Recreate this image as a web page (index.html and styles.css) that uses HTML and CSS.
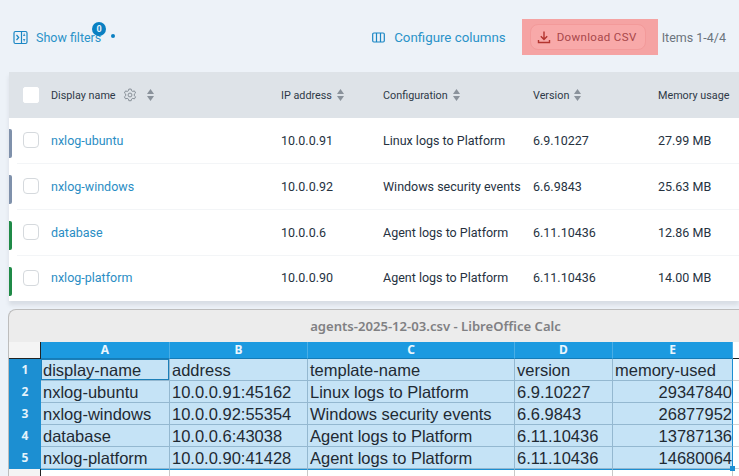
FILE: index.html
```html
<!DOCTYPE html>
<html lang="en">
<head>
<meta charset="utf-8">
<title>Agents</title>
<link rel="stylesheet" href="styles.css">
</head>
<body>
<div class="page">
  <div class="toolbar">
    <a class="tool filters">
      <svg class="ico" width="15" height="15" viewBox="0 0 15 15" fill="none" stroke="#1a86c4" stroke-width="1.2"><rect x="1" y="1.5" width="13" height="12" rx="1.5"/><path d="M8.5 1.5v12M3.5 5l2.2 2.5L3.5 10"/><path d="M11.2 3.6v2M10.2 5l1 1 1-1M11.2 11.4v-2M10.2 10l1-1 1 1" stroke-width=".9"/></svg>
      <span class="filter-label">Show filters<span class="badge">0</span></span>
      <span class="dot"></span>
    </a>
    <span class="spring"></span>
    <a class="tool columns">
      <svg class="ico" width="13" height="11" viewBox="0 0 13 11" fill="none" stroke="#1a86c4" stroke-width="1.2"><rect x=".7" y="1" width="11.6" height="9" rx="1.2"/><path d="M4.5 1v9M8.5 1v9"/></svg>
      <span>Configure columns</span>
    </a>
    <div class="highlight">
      <button class="csv">
        <svg width="14" height="14" viewBox="0 0 14 14" fill="none" stroke="#b3342f" stroke-width="1.4"><path d="M7 1.5v7.5M3.8 6.2L7 9.4l3.2-3.2M1.5 10v2.5h11V10"/></svg>
        <span>Download CSV</span>
      </button>
    </div>
    <span class="items">Items 1-4/4</span>
  </div>

  <div class="table">
    <div class="row head">
      <span class="cell-check"><span class="check head-check"></span></span>
      <span class="cell name-head">Display name
        <svg class="gear" width="14" height="14" viewBox="0 0 13 13" fill="none" stroke="#858d96" stroke-width=".9"><path d="M5.4 1h2.2l.3 1.5 1.2.7 1.5-.5 1.1 1.9-1.2 1v1.6l1.2 1-1.1 1.9-1.5-.5-1.2.7-.3 1.5H5.4l-.3-1.5-1.2-.7-1.5.5-1.1-1.9 1.2-1V5.6l-1.2-1 1.1-1.9 1.5.5 1.2-.7z"/><circle cx="6.5" cy="6.5" r="1.8"/></svg>
        <svg class="sort first" width="7" height="12" viewBox="0 0 7 12"><path d="M3.5 0L7 5H0z" fill="#8a929b"/><path d="M3.5 12L0 7h7z" fill="#8a929b"/></svg>
      </span>
      <span class="cell">IP address <svg class="sort" width="7" height="12" viewBox="0 0 7 12"><path d="M3.5 0L7 5H0z" fill="#8a929b"/><path d="M3.5 12L0 7h7z" fill="#8a929b"/></svg></span>
      <span class="cell">Configuration <svg class="sort" width="7" height="12" viewBox="0 0 7 12"><path d="M3.5 0L7 5H0z" fill="#8a929b"/><path d="M3.5 12L0 7h7z" fill="#8a929b"/></svg></span>
      <span class="cell">Version <svg class="sort" width="7" height="12" viewBox="0 0 7 12"><path d="M3.5 0L7 5H0z" fill="#8a929b"/><path d="M3.5 12L0 7h7z" fill="#8a929b"/></svg></span>
      <span class="cell">Memory usage</span>
    </div>
    <div class="row body">
      <span class="cell-check"><span class="status grey"></span><span class="check"></span></span>
      <a class="cell link">nxlog-ubuntu</a><span class="cell">10.0.0.91</span><span class="cell">Linux logs to Platform</span><span class="cell">6.9.10227</span><span class="cell">27.99 MB</span>
    </div>
    <div class="row body">
      <span class="cell-check"><span class="status grey"></span><span class="check"></span></span>
      <a class="cell link">nxlog-windows</a><span class="cell">10.0.0.92</span><span class="cell">Windows security events</span><span class="cell">6.6.9843</span><span class="cell">25.63 MB</span>
    </div>
    <div class="row body">
      <span class="cell-check"><span class="status green"></span><span class="check"></span></span>
      <a class="cell link">database</a><span class="cell">10.0.0.6</span><span class="cell">Agent logs to Platform</span><span class="cell">6.11.10436</span><span class="cell">12.86 MB</span>
    </div>
    <div class="row body last">
      <span class="cell-check"><span class="status green"></span><span class="check"></span></span>
      <a class="cell link">nxlog-platform</a><span class="cell">10.0.0.90</span><span class="cell">Agent logs to Platform</span><span class="cell">6.11.10436</span><span class="cell">14.00 MB</span>
    </div>
  </div>

  <div class="window">
    <div class="titlebar">agents-2025-12-03.csv - LibreOffice Calc</div>
    <div class="sheet">
      <div class="corner"></div><div class="ch">A</div><div class="ch">B</div><div class="ch">C</div><div class="ch">D</div><div class="ch">E</div><div class="ch-rest"></div>

      <div class="rh">1</div><div class="c active">display-name</div><div class="c">address</div><div class="c">template-name</div><div class="c">version</div><div class="c edge">memory-used</div><div class="rest"></div>
      <div class="rh">2</div><div class="c">nxlog-ubuntu</div><div class="c">10.0.0.91:45162</div><div class="c">Linux logs to Platform</div><div class="c">6.9.10227</div><div class="c edge num">29347840</div><div class="rest"></div>
      <div class="rh">3</div><div class="c">nxlog-windows</div><div class="c">10.0.0.92:55354</div><div class="c">Windows security events</div><div class="c">6.6.9843</div><div class="c edge num">26877952</div><div class="rest"></div>
      <div class="rh">4</div><div class="c">database</div><div class="c">10.0.0.6:43038</div><div class="c">Agent logs to Platform</div><div class="c">6.11.10436</div><div class="c edge num">13787136</div><div class="rest"></div>
      <div class="rh">5</div><div class="c">nxlog-platform</div><div class="c">10.0.0.90:41428</div><div class="c">Agent logs to Platform</div><div class="c">6.11.10436</div><div class="c edge num handle-cell">14680064<span class="handle"></span></div><div class="rest"></div>

      <div class="rh-blank"></div><div class="b"></div><div class="b"></div><div class="b"></div><div class="b"></div><div class="b"></div><div class="rest-blank"></div>
    </div>
  </div>
</div>
</body>
</html>
```

FILE: styles.css
```css
html, body {
  margin: 0;
  height: 476px;
  overflow: hidden;
}

.page {
  width: 739px;
  height: 476px;
  overflow: hidden;
  background: #edf2f8;
  font-family: Roboto, "Liberation Sans", sans-serif;
  color: #26323f;
}

.toolbar {
  height: 72px;
  display: flex;
  align-items: center;
  padding: 2px 0 0 13px;
  box-sizing: border-box;
  font-size: 12.5px;
}

.tool {
  display: flex;
  align-items: center;
  color: #2a93c9;
}

.filters .ico { margin-right: 8px; }

.filter-label {
  position: relative;
  white-space: nowrap;
}

.badge {
  position: absolute;
  left: 56px;
  top: -8px;
  width: 14px;
  height: 14px;
  border-radius: 50%;
  background: #0a80c2;
  color: #e8f3fa;
  font-size: 9px;
  font-weight: 700;
  line-height: 14px;
  text-align: center;
}

.dot {
  width: 4px;
  height: 4px;
  border-radius: 50%;
  background: #0a80c2;
  margin: -3px 0 0 10px;
}

.spring { flex: 1; }

.columns { font-size: 13.3px; margin-right: 16px; }

.columns .ico { margin-right: 9px; }

.highlight {
  width: 136px;
  height: 36px;
  background: #f5a3a3;
  display: flex;
  align-items: center;
  justify-content: center;
  box-sizing: border-box;
}

.csv {
  width: 116px;
  height: 26px;
  margin: 0 4px 0 0;
  padding: 0 0 0 6px;
  border: 1px solid #f39a9a;
  border-radius: 8px;
  background: #f8a9a9;
  color: #a8474a;
  font: 11.5px Roboto, sans-serif;
  letter-spacing: .35px;
  display: flex;
  align-items: center;
  gap: 6px;
  box-sizing: border-box;
}

.items {
  color: #6b747d;
  margin: 0 13px 0 4px;
  white-space: nowrap;
}

.table {
  margin-left: 9px;
  width: 730px;
  background: #fff;
  box-shadow: 0 4px 4px rgba(120, 130, 140, .18);
}

.row {
  display: grid;
  grid-template-columns: 42px 230px 102px 150px 125px 1fr;
  align-items: center;
  font-size: 12.5px;
  white-space: nowrap;
}

.head {
  height: 46px;
  background: #dee3e8;
  font-size: 10.8px;
  color: #2e3947;
}

.body {
  height: 46px;
  position: relative;
  padding-bottom: 2px;
  box-sizing: border-box;
}

.body:not(.last)::after {
  content: "";
  position: absolute;
  left: 8px;
  right: 0;
  bottom: 0;
  height: 1px;
  background: #f3f5f7;
}

.last { height: 45px; }

.cell { display: flex; align-items: center; gap: 5px; }

.cell-check {
  display: flex;
  align-items: center;
  height: 100%;
  position: relative;
}

.check {
  width: 14px;
  height: 14px;
  margin-left: 14px;
  border: 1px solid #d5d9dd;
  border-radius: 4px;
  background: #fff;
}

.head-check {
  border-color: #fff;
  border-radius: 2px;
}

.status {
  position: absolute;
  left: 0;
  top: 11px;
  width: 3px;
  height: 29px;
  border-radius: 0 2px 2px 0;
}

.grey { background: #7f91ab; }
.green { background: #1f8a47; }

.link { color: #2a8dc4; }

.gear { margin-left: 2px; }
.sort.first { margin-left: 5px; }

.window {
  margin: 8px 0 0 8px;
  height: 167px;
  width: 740px;
  border: 1px solid #bdbdbd;
  border-bottom: 0;
  border-right: 0;
  border-radius: 8px 0 0 0;
  background: #ececec;
  overflow: hidden;
  box-sizing: border-box;
}

.titlebar {
  height: 32px;
  padding-left: 114px;
  text-align: center;
  font: 600 13.1px/32px "Noto Sans", "Open Sans", sans-serif;
  color: #808083;
  box-sizing: border-box;
}

.sheet {
  display: grid;
  grid-template-columns: 32px 129px 138px 207px 98px 120px 1fr;
  grid-auto-rows: 22px;
  grid-template-rows: 17px;
  background: #fff;
  font-family: "Liberation Sans", sans-serif;
  font-size: 16.5px;
  color: #1f2a33;
}

.corner { background: #f4f4f4; border-right: 1px solid #222; border-bottom: 1px solid #222; }

.ch {
  background: #1c9ae0;
  color: #eaf6fd;
  font-family: "Noto Sans", sans-serif;
  font-size: 12px;
  font-weight: 700;
  text-align: center;
  line-height: 16px;
  border-right: 1px solid #4aaee6;
  border-bottom: 1px solid #157cb8;
  box-sizing: border-box;
}

.ch-rest { border-bottom: 1px solid #222; }

.rh {
  background: #1c8fd2;
  color: #e4f3fb;
  font-family: "Noto Sans", sans-serif;
  font-size: 12px;
  font-weight: 700;
  text-align: center;
  line-height: 22px;
}

.c {
  background: #c5e3f6;
  border-right: 1px solid #94b8d0;
  border-bottom: 1px solid #94b8d0;
  box-sizing: border-box;
  padding: 1px 0 0 2px;
  line-height: 21px;
  white-space: nowrap;
  overflow: hidden;
}

.active { box-shadow: inset 0 0 0 1px #1c7fb8; }

.edge { border-right-color: #1c8fd2; overflow: visible; }

.num { text-align: right; padding-right: 0; position: relative; }

.handle {
  position: absolute;
  right: -3px;
  bottom: -3px;
  width: 5px;
  height: 5px;
  background: #1c8fd2;
  z-index: 1;
}

.rest { border-bottom: 1px solid #d4d4d4; }

.rh-blank { border-right: 1px solid #222; box-sizing: border-box; background: #f4f4f4; }

.b { border-right: 1px solid #c9c9c9; border-top: 1px solid #1c8fd2; }

.rest-blank { background: #fff; }
```
